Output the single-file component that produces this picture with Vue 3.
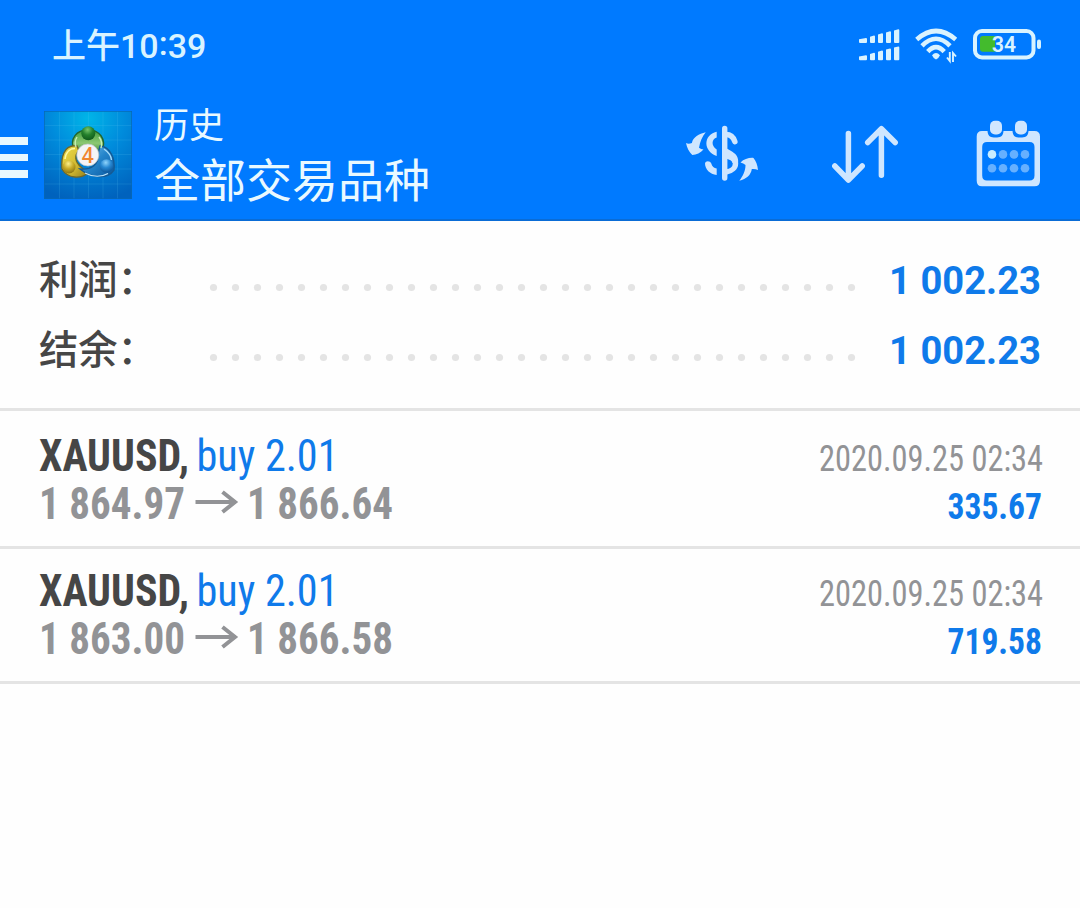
<script setup>
import { ref } from 'vue'

const totals = ref([
  { label: '利润：', value: '1 002.23' },
  { label: '结余：', value: '1 002.23' }
])

const deals = ref([
  { id: 1, symbol: 'XAUUSD,', side: 'buy 2.01', open: '1 864.97', close: '1 866.64', time: '2020.09.25 02:34', profit: '335.67' },
  { id: 2, symbol: 'XAUUSD,', side: 'buy 2.01', open: '1 863.00', close: '1 866.58', time: '2020.09.25 02:34', profit: '719.58' }
])

const dots = Array.from({ length: 30 }, (_, i) => 4.5 + i * 22)

// signal bars: left edge, width, top
const bars = [
  [0, 8, 10],
  [11, 5, 7.5],
  [19, 5, 5.3],
  [27, 5, 3.2],
  [35, 5.3, 1.2]
]
</script>

<template>
  <div class="app">
    <header class="header">
      <div class="status">
        <div class="clock">上午<span class="digits">10<span class="colon">:</span>39</span></div>
        <div class="status-icons">
          <svg width="42" height="34" viewBox="0 0 42 34" fill="#d9f3ff">
            <g v-for="row in 2" :key="row" :transform="`translate(0 ${(row - 1) * 17.2})`">
              <path
                v-for="([x, w, y], i) in bars"
                :key="i"
                :d="`M${x} ${y + 1.2} L${x + w - 1} ${y} q1 0 1 1 V14 q0 1 -1 1 H${x + 1} q-1 0 -1 -1z`"
              />
            </g>
          </svg>
          <svg width="44" height="36" viewBox="0 0 44 36" fill="none" stroke="#d9f3ff">
            <path d="M1.700 11.500 Q21 -5.500 40.700 11.500" stroke-width="4.600" />
            <path d="M7 17.800 Q21 3.600 35 17.800" stroke-width="4.600" />
            <path d="M12.800 23.600 Q21 14.600 29.200 23.600" stroke-width="4.600" />
            <path d="M17 27.300 Q21 22.700 25 27.300 Q24 30 21 31.500 Q18 30 17 27.300z" fill="#d9f3ff" stroke="none" />
            <path d="M34.800 24 V33 L32 29.500 M38 34 V25 L41 28.500" stroke-width="1.900" />
          </svg>
          <svg width="69" height="34" viewBox="0 0 69 34">
            <rect x="2" y="3" width="58.500" height="26.500" rx="7" fill="none" stroke="#d9f3ff" stroke-width="4" />
            <rect x="64" y="11.500" width="4" height="9.500" rx="2" fill="#d9f3ff" />
            <path d="M10 8 H22 V23.700 H10 Q7 23.700 7 20.700 V11 Q7 8 10 8z" fill="#43bb2d" />
            <text x="19" y="23.700" textLength="24" lengthAdjust="spacingAndGlyphs" class="level">34</text>
          </svg>
        </div>
      </div>

      <div class="toolbar">
        <div class="menu"><i></i><i></i><i></i></div>
        <svg class="logo" width="88" height="88" viewBox="0 0 88 88">
          <defs>
            <radialGradient id="sky" cx="50%" cy="8%" r="95%">
              <stop offset="0" stop-color="#00b5e8" />
              <stop offset="0.45" stop-color="#008bdc" />
              <stop offset="1" stop-color="#0062bd" />
            </radialGradient>
            <linearGradient id="green" x2="0" y2="1">
              <stop offset="0" stop-color="#3f9c3b" />
              <stop offset="0.55" stop-color="#8cc873" />
              <stop offset="1" stop-color="#358432" />
            </linearGradient>
            <linearGradient id="gold" x2="1" y2="1">
              <stop offset="0" stop-color="#f0df4c" />
              <stop offset="0.6" stop-color="#d0b830" />
              <stop offset="1" stop-color="#8d7b1c" />
            </linearGradient>
            <linearGradient id="azure" x2="1" y2="1">
              <stop offset="0" stop-color="#7cc6f0" />
              <stop offset="0.5" stop-color="#2484ca" />
              <stop offset="1" stop-color="#0a58a0" />
            </linearGradient>
            <radialGradient id="headGreen" cx="45%" cy="25%" r="75%">
              <stop offset="0" stop-color="#78c66c" />
              <stop offset="0.5" stop-color="#24802c" />
              <stop offset="1" stop-color="#105a1c" />
            </radialGradient>
            <radialGradient id="headGold" cx="45%" cy="25%" r="75%">
              <stop offset="0" stop-color="#fbf08a" />
              <stop offset="0.5" stop-color="#c9ad2a" />
              <stop offset="1" stop-color="#8b7512" />
            </radialGradient>
            <radialGradient id="headBlue" cx="45%" cy="25%" r="75%">
              <stop offset="0" stop-color="#8fd4fb" />
              <stop offset="0.5" stop-color="#2788d2" />
              <stop offset="1" stop-color="#0b5599" />
            </radialGradient>
          </defs>
          <rect width="88" height="88" fill="url(#sky)" />
          <path d="M15.500 0V88M30 0V88M44.500 0V88M59 0V88M73.500 0V88M0 14.500H88M0 29H88M0 43.500H88M0 58H88M0 73H88" stroke="#5ec4f4" stroke-opacity="0.16" />
          <path d="M0 .5H88M.5 0V88M87.500 0V88M0 87.500H88" stroke="#0868b4" stroke-opacity="0.7" />
          <path d="M30 40 C25 27 33 19 44 19 C55 19 63 27 58 41 L52 43 C50 35 38 34 35 41z" fill="url(#green)" stroke="#23652d" stroke-width="1.400" />
          <path d="M33 35 C19 33 17 48 18 58 C24 68 37 68 44 62 L37 56 C31 51 30 44 35 40z" fill="url(#gold)" stroke="#6f682a" stroke-width="1.400" />
          <path d="M56 35 C67 36 71 48 70 59 C64 68 48 68 36 58 C47 59 55 54 54 43z" fill="url(#azure)" stroke="#155a94" stroke-width="1.400" />
          <path d="M41 62 C49 66.500 58 66 64 62.500" fill="none" stroke="#bfe6fb" stroke-width="1.200" />
          <path d="M21 48 C22 40 27 37.500 31 37.500" fill="none" stroke="#fff9a5" stroke-width="1.600" />
          <path d="M33 26 Q30 31 32 36M55 26 Q59 31 57 37" fill="none" stroke="#c8eeb5" stroke-width="1.400" />
          <path d="M60 38 Q67 43 67.500 49" fill="none" stroke="#a8dcfa" stroke-width="1.400" />
          <circle cx="44.300" cy="22.300" r="7" fill="url(#headGreen)" />
          <circle cx="25" cy="56" r="6.500" fill="url(#headGold)" />
          <circle cx="62.500" cy="55" r="6.800" fill="url(#headBlue)" />
          <circle cx="43.800" cy="44" r="11" fill="#f4f4f6" stroke="#bcc3c9" stroke-width="0.700" />
          <text x="43.800" y="51.500" text-anchor="middle" class="four">4</text>
        </svg>
        <div class="titles">
          <div class="subtitle">历史</div>
          <div class="title">全部交易品种</div>
        </div>
        <div class="actions">
          <svg width="74" height="66" viewBox="0 0 74 66" fill="#cfe6ff">
            <g fill="none" stroke="#cfe6ff" stroke-linecap="round">
              <path d="M38.700 8.400 V58" stroke-width="5.400" />
              <path d="M40 14.500 C45 14.500 47.500 17.500 48.800 21.500" stroke-width="5.600" />
              <path d="M39.500 34 C53 37 52.500 50 40 52" stroke-width="5.400" />
            </g>
            <path d="M38 27 C44 31 54 33 52 44 L46.500 43 C46 40 43 39.500 38 38z" />
            <path d="M30.700 11.700 V17.500 C25.500 19 25 26 30.700 29.500 V36 C17 31 17 15 30.700 11.700z" />
            <path d="M19 43.500 C19.500 40.500 24 40.500 25.300 43.500 C26 46.500 28 48 30.700 48.500 V55 C24 54.500 19 49 19 43.500z" />
            <path d="M19.700 12.300 C13 14 7 17 5.900 23 Q2.500 24.500 0 23 C1 28 3 32 6.300 35 C10.500 34.500 14.500 33 17.500 29.500 Q15 29.500 13 27.700 C14 22 16 17 19.700 12.300z" />
            <path d="M53.300 60.700 C60.500 59 65 55 65.800 49 Q69 48.500 72 50 C71.500 45 70 41 67.500 37.900 C63 37.500 58 39 54.500 42.500 Q57.500 43 59.500 45 C59.500 51 57 56 53.300 60.700z" />
          </svg>
          <svg width="70" height="66" viewBox="0 0 70 66" fill="none" stroke="#cfe6ff" stroke-width="5.500" stroke-linecap="round" stroke-linejoin="round">
            <path d="M17.400 13.500 V59 M3.800 46 L17.400 60 L31.200 46" />
            <path d="M50.400 55.300 V9 M36.700 22.500 L50.400 8.700 L64.200 22.500" />
          </svg>
          <svg class="calendar" width="64" height="68" viewBox="0 0 64 68">
            <path fill="#cfe6ff" fill-rule="evenodd" d="M6 11 H11.500 C12 17 15 17.500 19.500 17.500 C24 17.500 27 17 27.500 11 H36.500 C37 17 40 17.500 44.500 17.500 C49 17.500 52 17 52.500 11 H58.500 Q64 11 64 16.500 V60.700 Q64 66.200 58.500 66.200 H6 Q.7 66.200 .7 60.700 V16.500 Q.7 11 6 11z M11 22 Q6.200 22 6.200 27 V55.500 Q6.200 60.500 11 60.500 H53.500 Q58.500 60.500 58.500 55.500 V27 Q58.500 22 53.500 22z" />
            <rect x="14" y="0.800" width="12" height="13.700" rx="5" fill="#cfe6ff" />
            <rect x="39" y="0.800" width="12" height="13.700" rx="5" fill="#cfe6ff" />
            <g v-for="r in 2" :key="r">
              <circle v-for="c in 4" :key="c" :cx="5 + c * 11" :cy="20.5 + r * 13.9" r="4.300" :fill="r === 1 && c === 1 ? '#c9edff' : '#66b0ff'" />
            </g>
          </svg>
        </div>
      </div>
    </header>

    <section class="totals">
      <div v-for="t in totals" :key="t.label" class="total">
        <span class="total-label">{{ t.label }}</span>
        <svg class="dots" width="652" height="10" fill="#e4e4e4">
          <circle v-for="x in dots" :key="x" :cx="x" cy="4.500" r="3.600" />
        </svg>
        <svg class="fit total-value" width="154" height="60">
          <text x="0" y="44" textLength="152" lengthAdjust="spacingAndGlyphs">{{ t.value }}</text>
        </svg>
      </div>
    </section>

    <section v-for="d in deals" :key="d.id" class="deal">
      <svg class="fit deal-main" width="370" height="110">
        <text class="symbol" x="0" y="45" textLength="150" lengthAdjust="spacingAndGlyphs">{{ d.symbol }}</text>
        <text class="side" x="157.500" y="45" textLength="142" lengthAdjust="spacingAndGlyphs">{{ d.side }}</text>
        <text class="price" x="0" y="93" textLength="146" lengthAdjust="spacingAndGlyphs">{{ d.open }}</text>
        <path d="M156.500 76 H197 M183.500 66 L196 76 L183.500 86" fill="none" stroke="#929396" stroke-width="4" />
        <text class="price" x="208" y="93" textLength="146" lengthAdjust="spacingAndGlyphs">{{ d.close }}</text>
      </svg>
      <svg class="fit deal-side" width="226" height="110">
        <text class="time" x="2" y="45" textLength="224" lengthAdjust="spacingAndGlyphs">{{ d.time }}</text>
        <text class="profit" x="130.500" y="93" textLength="94.500" lengthAdjust="spacingAndGlyphs">{{ d.profit }}</text>
      </svg>
    </section>
  </div>
</template>

<style>
body {
  margin: 0;
  background: #fff;
}
</style>

<style scoped>
.app {
  width: 1080px;
  height: 908px;
  overflow: hidden;
  background: #fefefe;
  font-family: Roboto, "Noto Sans CJK SC", sans-serif;
}
svg {
  display: block;
  flex: none;
}
.header {
  height: 221px;
  box-sizing: border-box;
  background: #007aff;
  border-bottom: 2px solid #0a6cd6;
}
.status {
  height: 90px;
  display: flex;
  justify-content: space-between;
  padding: 0 38px 0 52px;
}
.clock {
  line-height: 88px;
  color: #d9f3ff;
  font-family: "Noto Sans CJK SC", sans-serif;
  font-size: 34px;
  font-weight: 500;
}
.digits {
  font-family: Roboto, sans-serif;
  font-size: 34px;
}
.colon {
  position: relative;
  top: -3px;
}
.status-icons {
  display: flex;
  gap: 14px;
  padding-top: 28px;
}
.level {
  font-size: 22px;
  font-weight: 600;
  fill: #d9f3ff;
}
.toolbar {
  display: flex;
  height: 129px;
}
.menu {
  display: flex;
  flex-direction: column;
  gap: 9px;
  width: 28px;
  padding-top: 47px;
}
.menu i {
  height: 7.500px;
  background: #e8f8ff;
}
.logo {
  margin: 21px 0 0 16px;
}
.four {
  font-family: "Open Sans", sans-serif;
  font-size: 21px;
  font-weight: 600;
  fill: #f0862f;
}
.titles {
  flex: 1;
  margin-left: 22px;
  color: #e9f9ff;
  font-family: "Noto Sans CJK SC", sans-serif;
  white-space: nowrap;
}
.subtitle {
  margin-top: 8px;
  font-size: 35px;
  line-height: 50px;
}
.title {
  margin-top: -2px;
  font-size: 46px;
  line-height: 62px;
}
.actions {
  display: flex;
  gap: 71px;
  padding: 30px 40px 0 0;
}
.calendar {
  margin-left: 4px;
}
.totals {
  height: 187px;
  border-bottom: 3px solid #e4e4e4;
}
.total {
  display: flex;
  align-items: flex-start;
  height: 70px;
  padding: 0 37px 0 39px;
}
.total:first-child {
  padding-top: 29px;
}
.total-label {
  width: 170px;
  margin-top: -3px;
  font-family: "Noto Sans CJK SC", sans-serif;
  font-size: 39.300px;
  font-weight: 500;
  line-height: 60px;
  color: #464646;
}
.dots {
  margin-top: 33px;
}
.total-value {
  margin-left: auto;
  font-size: 39px;
  font-weight: 700;
  fill: #0f7aea;
}
.fit {
  overflow: visible;
}
.deal {
  display: flex;
  justify-content: space-between;
  height: 120px;
  padding: 12px 37px 0 39px;
  border-bottom: 3px solid #e4e4e4;
}
.totals + .deal {
  padding-top: 15px;
}
.deal-main {
  font-size: 43.500px;
  font-stretch: 75%;
}
.deal-side {
  font-size: 36px;
  font-stretch: 75%;
}
.symbol {
  font-weight: 700;
  fill: #464646;
}
.side {
  fill: #0f7aea;
}
.price {
  font-weight: 700;
  fill: #929396;
}
.time {
  fill: #929396;
}
.profit {
  font-weight: 700;
  fill: #0f7aea;
}
</style>
